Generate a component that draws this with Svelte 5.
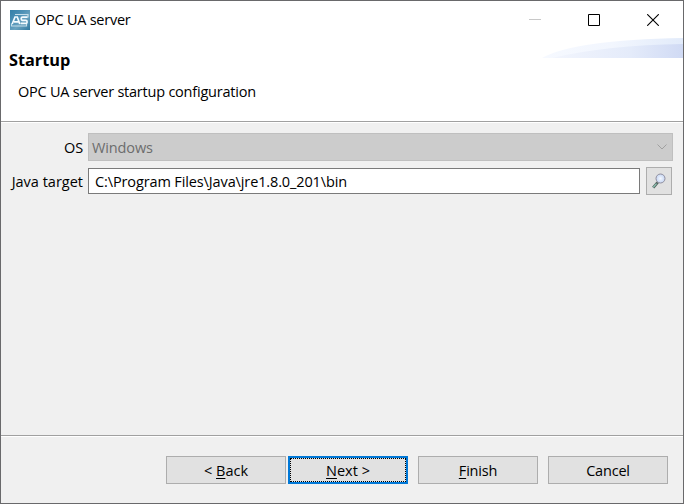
<script>
  let target = $state('C:\\Program Files\\Java\\jre1.8.0_201\\bin');
</script>

<div class="window">
  <header>
    <div class="titlebar">
      <svg class="logo" width="20" height="20" viewBox="0 0 20 20">
        <defs>
          <linearGradient id="tile" x1="0" y1="0" x2="1" y2="1">
            <stop offset="0" stop-color="#347fa8" />
            <stop offset=".38" stop-color="#4f92b7" />
            <stop offset=".6" stop-color="#6aa3c0" />
            <stop offset="1" stop-color="#2f789f" />
          </linearGradient>
        </defs>
        <rect width="20" height="20" fill="url(#tile)" />
        <path d="M5 4.500h13v3M1.500 13.500v2.500h15v-2" fill="none" stroke="#c4deea" stroke-width="1.200" />
        <path d="M2.200 14 5 7h2.300l2.500 7M4 11.800h4.500M17.500 7.200h-5q-1.300 0-1.300 1.600t1.300 1.600h3.300q1.300 0 1.300 1.500t-1.300 1.500h-5" fill="none" stroke="#f4fbff" stroke-width="1.700" />
      </svg>
      <span class="title">OPC UA server</span>
      <div class="controls">
        <svg width="12" height="12" viewBox="0 0 12 12"><path d="M0 5.500h12" stroke="#c8c8c8" /></svg>
        <svg width="12" height="12" viewBox="0 0 12 12"><path d="M.5.500h11v11H.500z" fill="none" stroke="#000" /></svg>
        <svg width="12" height="12" viewBox="0 0 12 12"><path d="M.2.200l11.600 11.600M11.800.200.200 11.800" stroke="#000" stroke-width="1.100" /></svg>
      </div>
    </div>
    <svg class="swoosh" width="141" height="20" viewBox="0 0 141 20">
      <defs>
        <linearGradient id="sweep"><stop offset="0" stop-color="#f6f9ff" /><stop offset=".5" stop-color="#f2f6fe" /><stop offset="1" stop-color="#e2ebfa" /></linearGradient>
        <linearGradient id="core"><stop offset="0" stop-color="#f2f5fd" /><stop offset=".6" stop-color="#e4ebfa" /><stop offset="1" stop-color="#d0daf4" /></linearGradient>
      </defs>
      <path d="M0 20Q32 2 141 0v20z" fill="url(#sweep)" />
      <path d="M10 20Q65 7 141 6v14z" fill="url(#core)" />
    </svg>
    <h1>Startup</h1>
    <p>OPC UA server startup configuration</p>
  </header>

  <main>
    <div class="row">
      <span class="label os">OS</span>
      <div class="combo">
        <span>Windows</span>
        <svg width="10" height="6" viewBox="0 0 10 6"><path d="M.5.500 5 5 9.500.500" fill="none" stroke="#a0a0a0" /></svg>
      </div>
    </div>
    <div class="row">
      <label class="label java" for="target">Java target</label>
      <input id="target" bind:value={target} spellcheck="false" />
      <button class="browse" aria-label="Browse">
        <svg width="14" height="16" viewBox="0 0 14 16">
          <defs><radialGradient id="lens"><stop offset="0" stop-color="#f4f8ff" /><stop offset="1" stop-color="#c5d5f2" /></radialGradient></defs>
          <path d="M5.700 9.300 1.200 14.600" stroke="#53645f" stroke-width="2.800" />
          <path d="M4.500 10.700 1.200 14.400" stroke="#91c7b7" stroke-width="1.200" />
          <circle cx="8.500" cy="5.500" r="4.500" fill="url(#lens)" stroke="#918f9e" />
        </svg>
      </button>
    </div>
  </main>

  <footer>
    <button class="back">&lt; <u>B</u>ack</button>
    <button class="next"><span><u>N</u>ext &gt;</span></button>
    <button class="finish"><u>F</u>inish</button>
    <button class="cancel">Cancel</button>
  </footer>
</div>

<style>
  .window, .window * { box-sizing: border-box; }
  .window {
    width: 684px; height: 504px; border: 1px solid #69696b;
    background: #f0f0f0; color: #000; display: flex; flex-direction: column;
    font: 14.5px/20px "Open Sans", "Noto Sans", sans-serif;
  }
  header { position: relative; height: 121px; background: #fff; border-bottom: 1px solid #a0a0a0; flex: none; }
  .titlebar { height: 37px; padding-left: 9px; display: flex; align-items: center; }
  .logo { flex: none; }
  .title { margin-left: 5px; letter-spacing: -.25px; }
  .controls { margin-left: auto; margin-right: 24px; display: flex; gap: 47px; }
  .swoosh { position: absolute; right: 0; top: 37px; }
  h1 { margin: 12px 0 0 8px; font-size: 16.3px; line-height: 20px; font-weight: 700; }
  p { margin: 12px 0 0 17px; line-height: 20px; letter-spacing: -.22px; }
  main { flex: 1; border-top: 1px solid #fff; border-bottom: 1px solid #a0a0a0; padding: 10px 10px 0 0; }
  .row { display: flex; height: 28px; align-items: center; margin-bottom: 6px; }
  .label { width: 82px; margin-right: 5px; text-align: right; white-space: nowrap; flex: none; padding-top: 1px; }
  .os { letter-spacing: -.1px; }
  .combo { flex: 1; height: 28px; border: 1px solid #bfbfbf; background: #ccc; color: #6d6d6d; padding: 0 5px 0 3px; display: flex; align-items: center; justify-content: space-between; }
  .combo span { letter-spacing: -.12px; padding-top: 1px; }
  input { width: 552px; height: 26px; border: 1px solid #7a7a7a; background: #fff; padding: 0 6px; font: inherit; letter-spacing: -.12px; color: #000; outline: 0; border-radius: 0; }
  button { font: inherit; color: #000; background: #e1e1e1; border: 1px solid #adadad; border-radius: 0; padding: 0; display: flex; align-items: center; justify-content: center; white-space: pre; }
  .browse { width: 26px; height: 28px; margin-left: 6px; }
  footer { height: 67px; flex: none; border-top: 1px solid #fff; padding: 19px 15px 0 0; display: flex; justify-content: flex-end; }
  footer button { width: 120px; height: 28px; padding-top: 1px; }
  footer .next { margin: 0 10px 0 2px; border: 2px solid #0078d7; padding: 0; }
  .next span { width: 116px; height: 24px; border: 1px dotted #000; line-height: 23px; }
  .finish { margin-right: 10px; }
  .finish, .cancel { letter-spacing: -.2px; }
  u { text-underline-offset: 2px; text-decoration-thickness: 1px; text-decoration-skip-ink: none; }
</style>
